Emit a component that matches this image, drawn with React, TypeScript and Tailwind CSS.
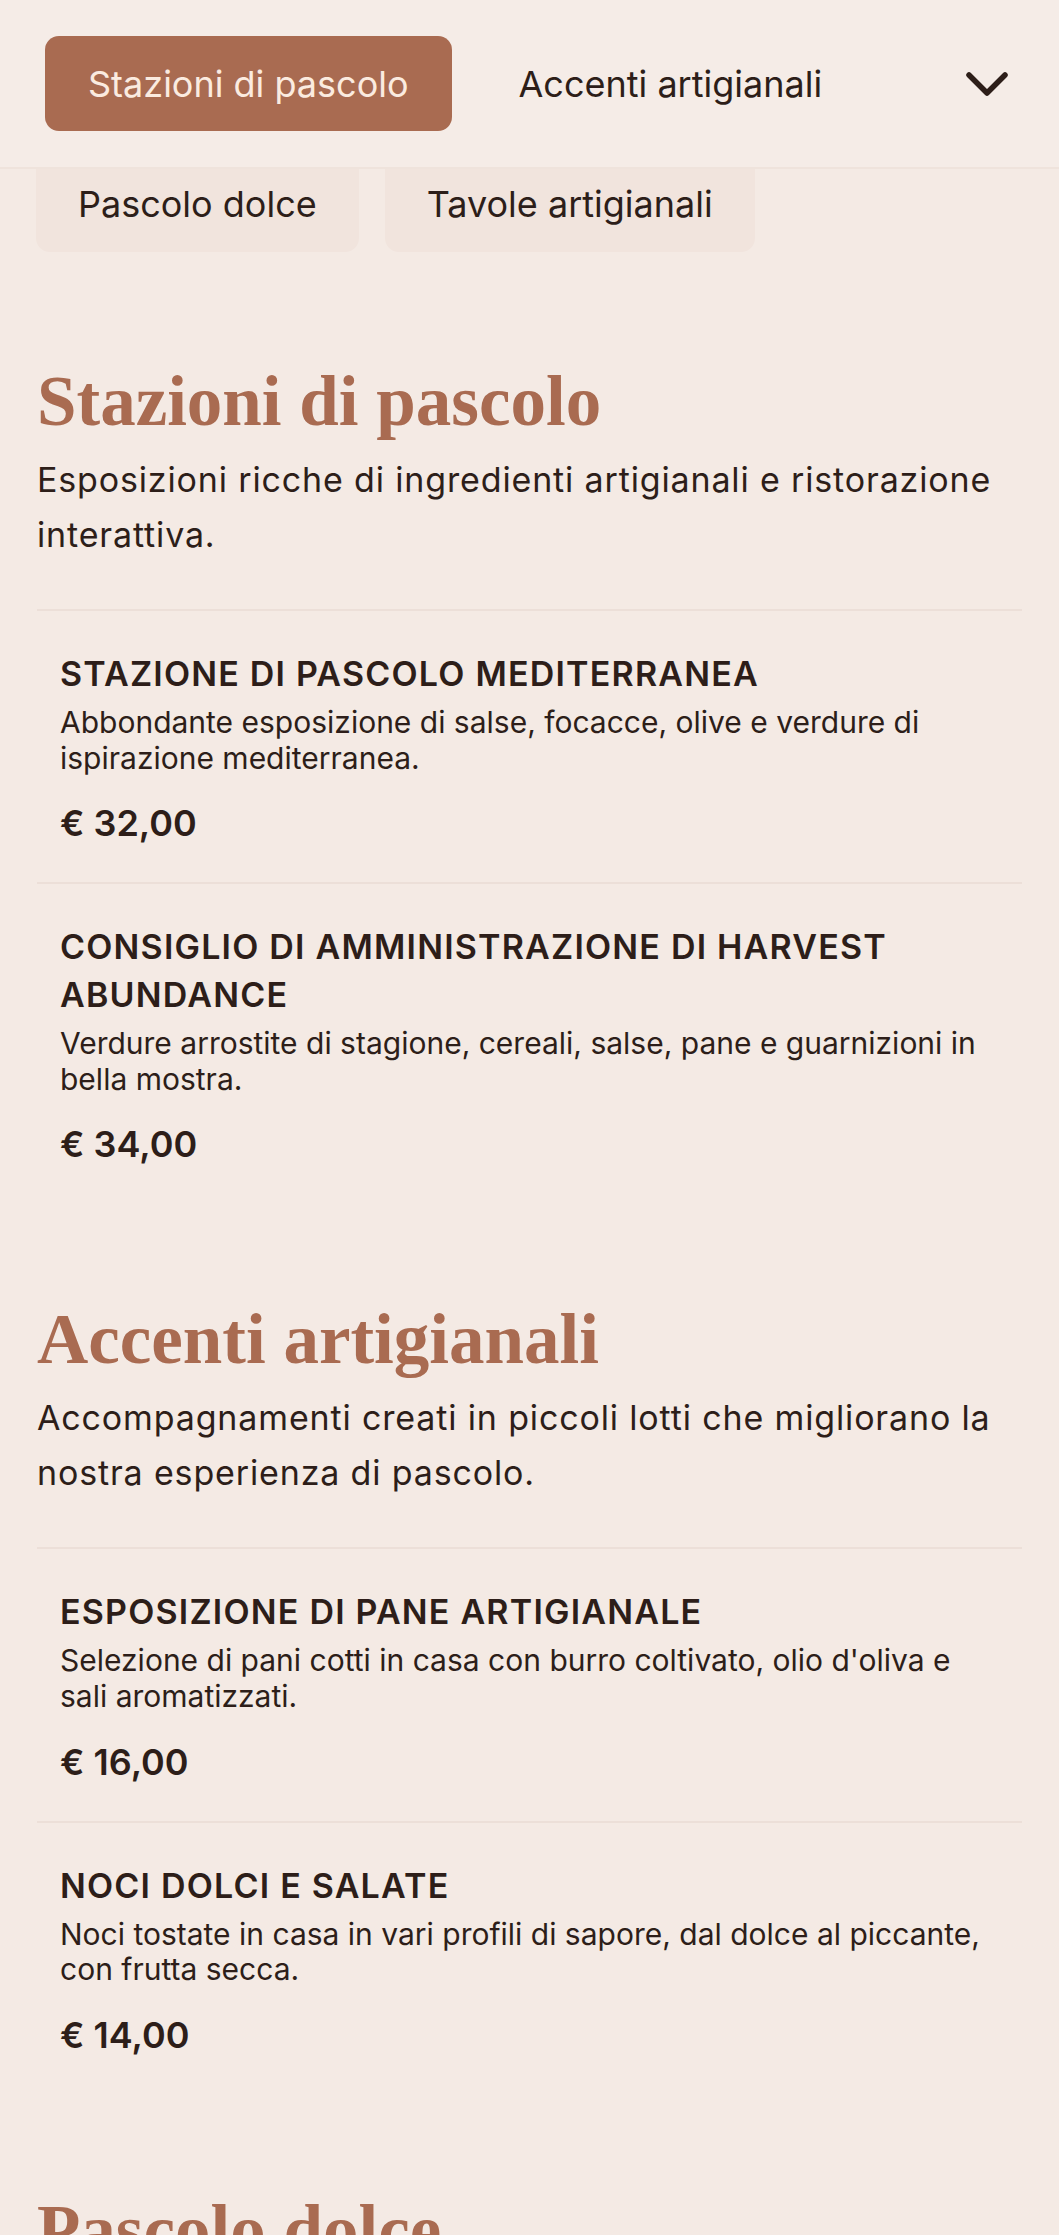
import React from 'react'

type MenuItem = {
  name: string
  description: string
  price: string
}

type MenuSection = {
  id: string
  title: string
  description: string
  items: MenuItem[]
}

const sections: MenuSection[] = [
  {
    id: 'stazioni',
    title: 'Stazioni di pascolo',
    description: 'Esposizioni ricche di ingredienti artigianali e ristorazione interattiva.',
    items: [
      {
        name: 'Stazione di pascolo mediterranea',
        description: 'Abbondante esposizione di salse, focacce, olive e verdure di ispirazione mediterranea.',
        price: '€ 32,00',
      },
      {
        name: 'Consiglio di amministrazione di Harvest Abundance',
        description: 'Verdure arrostite di stagione, cereali, salse, pane e guarnizioni in bella mostra.',
        price: '€ 34,00',
      },
    ],
  },
  {
    id: 'accenti',
    title: 'Accenti artigianali',
    description: 'Accompagnamenti creati in piccoli lotti che migliorano la nostra esperienza di pascolo.',
    items: [
      {
        name: 'Esposizione di pane artigianale',
        description: "Selezione di pani cotti in casa con burro coltivato, olio d'oliva e sali aromatizzati.",
        price: '€ 16,00',
      },
      {
        name: 'Noci dolci e salate',
        description: 'Noci tostate in casa in vari profili di sapore, dal dolce al piccante, con frutta secca.',
        price: '€ 14,00',
      },
    ],
  },
  {
    id: 'dolce',
    title: 'Pascolo dolce',
    description: 'Dolcetti, frutta e cioccolato per chiudere in bellezza.',
    items: [],
  },
]

const sans = { fontFamily: 'Inter, "Noto Sans", "Liberation Sans", sans-serif' }

function Chevron() {
  return (
    <svg width="46" height="28" viewBox="0 0 46 28" fill="none" aria-hidden="true">
      <polyline
        points="5,5 23,23 41,5"
        stroke="#2d1e19"
        strokeWidth="5.5"
        strokeLinecap="round"
        strokeLinejoin="round"
      />
    </svg>
  )
}

function Item({ item }: { item: MenuItem }) {
  return (
    <div className="border-t-2 border-[#ecdfd8] px-[23px] pt-[39px] pb-[34px]">
      <h3 className="text-[34px] font-semibold uppercase leading-[48px] tracking-[1.2px] text-[#2d1e19]">
        {item.name}
      </h3>
      <p className="mt-[7px] text-[30px] leading-[35.6px] text-[#2d1e19]">{item.description}</p>
      <div className="mt-[22px] text-[36px] font-semibold leading-[50px] text-[#2d1e19]">{item.price}</div>
    </div>
  )
}

export default function App() {
  const tabs = ['Stazioni di pascolo', 'Accenti artigianali']
  const moreTabs = ['Pascolo dolce', 'Tavole artigianali']

  return (
    <div className="min-h-screen bg-[#f4eae4]" style={sans}>
      <header className="relative z-10 flex items-center border-b-2 border-[#efe3dc] bg-[#f5ece7] py-[36px] pl-[45px] pr-[49px]">
        <nav className="flex items-center gap-[24px]">
          {tabs.map((t, i) => (
            <button
              key={t}
              className={`flex h-[95px] items-center rounded-[14px] px-[43px] text-[36px] ${
                i === 0 ? 'bg-[#a96b51] text-[#fbebe0]' : 'text-[#2d1e19]'
              }`}
            >
              {t}
            </button>
          ))}
        </nav>
        <div className="flex-1" />
        <Chevron />
      </header>

      {/* Overflowed tabs scrolling under the bar */}
      <div className="-mt-[14px] flex gap-[26px] px-[36px]">
        {moreTabs.map(t => (
          <button
            key={t}
            className="flex h-[97px] items-center rounded-[14px] bg-[#f1e4dd] px-[42px] text-[36px] text-[#2d1e19]"
          >
            {t}
          </button>
        ))}
      </div>

      <main className="px-[37px] pt-[107px]">
        {sections.map((s, si) => (
          <section key={s.id} className={si === 0 ? '' : 'mt-[94px]'}>
            <h2
              className="text-[71px] font-bold leading-[84px] text-[#a96b51]"
              style={{ fontFamily: '"Liberation Serif", "DejaVu Serif", serif' }}
            >
              {s.title}
            </h2>
            <p className="mt-[9px] text-[34px] leading-[55px] tracking-[0.85px] text-[#2d1e19]">{s.description}</p>
            <div className="mt-[47px]">
              {s.items.map(it => (
                <Item key={it.name} item={it} />
              ))}
            </div>
          </section>
        ))}
      </main>
    </div>
  )
}
